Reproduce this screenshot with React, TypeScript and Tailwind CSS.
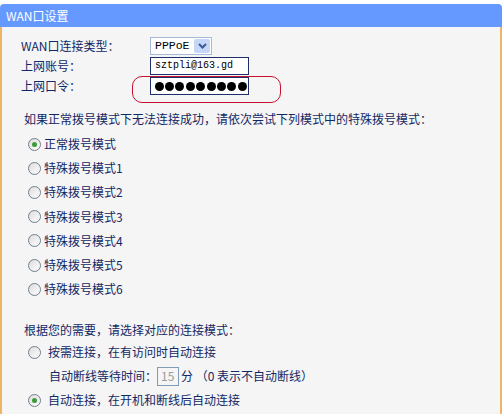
import React, { useState } from 'react';

const font = { fontFamily: '"Noto Sans CJK SC", "Noto Sans", sans-serif' };

const Radio: React.FC<{ checked?: boolean; onClick?: () => void }> = ({ checked, onClick }) => (
  <span
    onClick={onClick}
    className="flex h-[13px] w-[13px] shrink-0 items-center justify-center rounded-full border border-[#6f7f8f] bg-gradient-to-br from-[#dcdcdc] to-white"
  >
    {checked && <span className="h-[5px] w-[5px] rounded-full bg-[#3a9a3a]" />}
  </span>
);

const modes = ['正常拨号模式', '特殊拨号模式1', '特殊拨号模式2', '特殊拨号模式3', '特殊拨号模式4', '特殊拨号模式5', '特殊拨号模式6'];

const App: React.FC = () => {
  const [mode, setMode] = useState(0);
  const [connect, setConnect] = useState(1);

  return (
    <div className="min-h-screen bg-white text-[12px] leading-none text-[#122864]" style={font}>
      <div className="w-[502px]">
        <div className="mt-[4px] flex h-[23px] items-center rounded-t-[4px] bg-[#6699ff] pl-[6px] text-white">WAN口设置</div>
        <div className="border-l-[2px] border-r-[2px] border-[#efb566] bg-[#f5f5f5] pb-[2px] pt-[9px]">
          <div className="relative">
            <div className="flex h-[20px] items-center">
              <span className="w-[148px] pl-[19px]">WAN口连接类型：</span>
              <div className="flex h-[18px] w-[62px] items-center justify-between border border-[#a5b9d9] bg-white pl-[4px] pr-[1px]">
                <span className="font-['Liberation_Mono'] text-[11.5px] text-black">PPPoE</span>
                <span className="flex h-[14px] w-[16px] items-center justify-center rounded-[2px] bg-[#c6d6f6]">
                  <svg width="9" height="6" viewBox="0 0 9 6"><path d="M1 1 L4.5 4.5 L8 1" stroke="#3a5a9a" strokeWidth="2" fill="none" /></svg>
                </span>
              </div>
            </div>
            <div className="flex h-[20px] items-center">
              <span className="w-[148px] pl-[19px]">上网账号：</span>
              <div className="flex h-[18px] w-[99px] items-center border border-[#1f2f6c] bg-white pl-[4px] font-['Liberation_Mono'] text-[10px] text-black">sztpli@163.gd</div>
            </div>
            <div className="flex h-[20px] items-center">
              <span className="w-[148px] pl-[19px]">上网口令：</span>
              <div className="flex h-[18px] w-[99px] items-center border border-[#1f2f6c] bg-white pl-[3px] text-black">
                {Array.from({ length: 9 }).map((_, i) => (
                  <span key={i} className="flex w-[10.4px] justify-center">
                    <span className="h-[9px] w-[9px] rounded-full bg-black" />
                  </span>
                ))}
              </div>
            </div>
            <div className="absolute left-[130px] top-[40px] h-[27px] w-[149px] rounded-[10px] border border-[#c8102e]" />
          </div>

          <div className="mt-[13px] flex h-[20px] items-center pl-[22px]">如果正常拨号模式下无法连接成功，请依次尝试下列模式中的特殊拨号模式：</div>
          <div className="mt-[3px]">
            {modes.map((m, i) => (
              <div key={m} className="flex h-[24.2px] items-center gap-[3px] pl-[26px]">
                <Radio checked={mode === i} onClick={() => setMode(i)} />
                <span>{m}</span>
              </div>
            ))}
          </div>

          <div className="mt-[19px] flex h-[20px] items-center pl-[22px]">根据您的需要，请选择对应的连接模式：</div>
          <div className="flex h-[24px] items-center gap-[7px] pl-[26px]">
            <Radio checked={connect === 0} onClick={() => setConnect(0)} />
            <span>按需连接，在有访问时自动连接</span>
          </div>
          <div className="flex h-[24px] items-center pl-[47px]">
            <span>自动断线等待时间：</span>
            <span className="flex h-[19px] w-[22px] items-center border border-[#7f9db9] bg-[#f5f5f5] pl-[3px] text-[#9a9a9a]">15</span>
            <span className="ml-[2px]">分 （0 表示不自动断线）</span>
          </div>
          <div className="flex h-[24px] items-center gap-[7px] pl-[26px]">
            <Radio checked={connect === 1} onClick={() => setConnect(1)} />
            <span>自动连接，在开机和断线后自动连接</span>
          </div>
        </div>
      </div>
    </div>
  );
};

export default App;
